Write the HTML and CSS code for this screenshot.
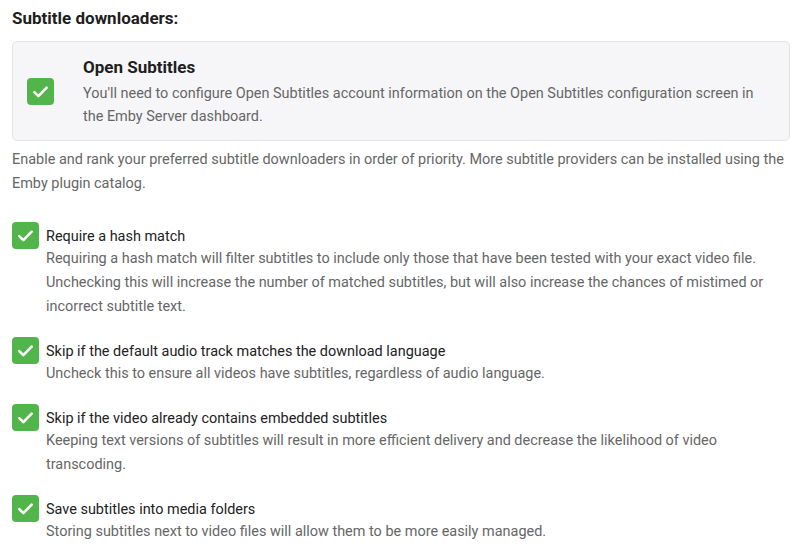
FILE: index.html
```html
<!DOCTYPE html>
<html>
<head>
<meta charset="utf-8">
<link rel="stylesheet" href="styles.css">
</head>
<body>
<div class="page">
  <h2 class="heading">Subtitle downloaders:</h2>
  <div class="provider">
    <span class="cb cb-box"><svg viewBox="0 0 24 24" width="27" height="27"><path d="M6.5 12.5l3.6 3.6 7.4-7.6" fill="none" stroke="#fff" stroke-width="2.3" stroke-linecap="round" stroke-linejoin="round"/></svg></span>
    <div class="provider-text">
      <div class="provider-title">Open Subtitles</div>
      <div class="provider-desc">You'll need to configure Open Subtitles account information on the Open Subtitles configuration screen in the Emby Server dashboard.</div>
    </div>
  </div>
  <p class="intro">Enable and rank your preferred subtitle downloaders in order of priority. More subtitle providers can be installed using the Emby plugin catalog.</p>

  <div class="option">
    <div class="option-row">
      <span class="cb"><svg viewBox="0 0 24 24" width="27" height="27"><path d="M6.5 12.5l3.6 3.6 7.4-7.6" fill="none" stroke="#fff" stroke-width="2.3" stroke-linecap="round" stroke-linejoin="round"/></svg></span>
      <span class="option-label">Require a hash match</span>
    </div>
    <div class="option-desc">Requiring a hash match will filter subtitles to include only those that have been tested with your exact video file. Unchecking this will increase the number of matched subtitles, but will also increase the chances of mistimed or incorrect subtitle text.</div>
  </div>

  <div class="option">
    <div class="option-row">
      <span class="cb"><svg viewBox="0 0 24 24" width="27" height="27"><path d="M6.5 12.5l3.6 3.6 7.4-7.6" fill="none" stroke="#fff" stroke-width="2.3" stroke-linecap="round" stroke-linejoin="round"/></svg></span>
      <span class="option-label">Skip if the default audio track matches the download language</span>
    </div>
    <div class="option-desc">Uncheck this to ensure all videos have subtitles, regardless of audio language.</div>
  </div>

  <div class="option">
    <div class="option-row">
      <span class="cb"><svg viewBox="0 0 24 24" width="27" height="27"><path d="M6.5 12.5l3.6 3.6 7.4-7.6" fill="none" stroke="#fff" stroke-width="2.3" stroke-linecap="round" stroke-linejoin="round"/></svg></span>
      <span class="option-label">Skip if the video already contains embedded subtitles</span>
    </div>
    <div class="option-desc">Keeping text versions of subtitles will result in more efficient delivery and decrease the likelihood of video transcoding.</div>
  </div>

  <div class="option">
    <div class="option-row">
      <span class="cb"><svg viewBox="0 0 24 24" width="27" height="27"><path d="M6.5 12.5l3.6 3.6 7.4-7.6" fill="none" stroke="#fff" stroke-width="2.3" stroke-linecap="round" stroke-linejoin="round"/></svg></span>
      <span class="option-label">Save subtitles into media folders</span>
    </div>
    <div class="option-desc">Storing subtitles next to video files will allow them to be more easily managed.</div>
  </div>
</div>
</body>
</html>
```
FILE: styles.css
```css
html, body {
  margin: 0;
  padding: 0;
  background: #fff;
}
body {
  font-family: Roboto, "Liberation Sans", sans-serif;
  color: #222;
}
.page {
  padding: 8px 12px 0 12px;
}
.heading {
  margin: 0;
  font-size: 17px;
  font-weight: 700;
  line-height: 21px;
  color: #1e1e1e;
}
.provider {
  margin-top: 12px;
  display: flex;
  align-items: center;
  background: #f6f6f8;
  border: 1px solid #e4e4e6;
  border-radius: 5px;
  padding: 13px 14px 12px 14px;
}
.cb {
  flex: none;
  width: 27px;
  height: 27px;
  background: #52b54b;
  border-radius: 4px;
  display: flex;
  align-items: center;
  justify-content: center;
}
.cb svg { display: block; }
.provider-text {
  margin-left: 29px;
}
.provider-title {
  font-size: 17px;
  font-weight: 700;
  line-height: 24px;
  color: #1e1e1e;
}
.provider-desc {
  font-size: 14.45px;
  line-height: 23px;
  color: #666;
  margin-top: 3px;
}
.intro {
  margin: 7px 0 26px 0;
  font-size: 14.45px;
  line-height: 24px;
  color: #666;
}
.option {
  margin-bottom: 18px;
}
.option-row {
  display: flex;
  align-items: center;
}
.option-label {
  margin-left: 7px;
  padding-top: 1px;
  font-size: 14.45px;
  color: #222;
}
.option-desc {
  margin-left: 34px;
  margin-top: -2px;
  font-size: 14.45px;
  line-height: 24px;
  color: #666;
}
```
